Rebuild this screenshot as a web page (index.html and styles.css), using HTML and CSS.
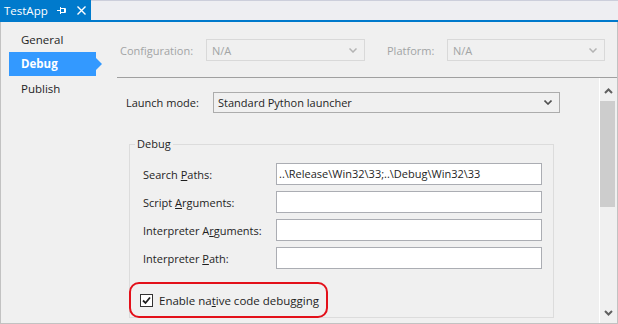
FILE: index.html
```html
<!DOCTYPE html>
<html lang="en">
<head>
    <meta charset="UTF-8">
    <title>TestApp</title>
    <link rel="stylesheet" href="styles.css">
</head>
<body>
    <div class="tabbar">
        <div class="tab">
            <span class="tab-title">TestApp</span>
            <svg class="tab-icon pin" width="10" height="9" viewBox="0 0 10 9">
                <path d="M0 4.5 H3.5 M3.5 1 V8 M3.5 2.5 H8.5 V6.5 H3.5 M7.5 2.5 V6.5" fill="none" stroke="#fff" stroke-width="1"/>
            </svg>
            <svg class="tab-icon" width="9" height="9" viewBox="0 0 9 9">
                <path d="M0.5 0.5 L8.5 8.5 M8.5 0.5 L0.5 8.5" fill="none" stroke="#fff" stroke-width="1.4"/>
            </svg>
        </div>
    </div>

    <div class="main">
        <nav class="sidebar">
            <div class="nav-item">General</div>
            <div class="nav-item active">Debug</div>
            <div class="nav-item">Publish</div>
        </nav>

        <div class="content">
            <div class="config-bar">
                <span class="config-label">Configuration:</span>
                <div class="select disabled config-select">
                    <span>N/A</span>
                    <svg width="8" height="5" viewBox="0 0 8 5"><path d="M0.5 0.5 L4 4 L7.5 0.5" fill="none" stroke="#b4b4b4" stroke-width="1.5"/></svg>
                </div>
                <span class="config-label platform-label">Platform:</span>
                <div class="select disabled platform-select">
                    <span>N/A</span>
                    <svg width="8" height="5" viewBox="0 0 8 5"><path d="M0.5 0.5 L4 4 L7.5 0.5" fill="none" stroke="#b4b4b4" stroke-width="1.5"/></svg>
                </div>
            </div>

            <div class="scroll-area">
                <div class="panel">
                    <div class="launch-row">
                        <span class="launch-label">Launch mode:</span>
                        <div class="select launch-select">
                            <span>Standard Python launcher</span>
                            <svg width="8" height="5" viewBox="0 0 8 5"><path d="M0.5 0.5 L4 4 L7.5 0.5" fill="none" stroke="#505050" stroke-width="1.6"/></svg>
                        </div>
                    </div>

                    <fieldset class="group">
                        <legend>Debug</legend>
                        <div class="field-row">
                            <span class="field-label">Search <u>P</u>aths:</span>
                            <div class="text-input">..\Release\Win32\33;..\Debug\Win32\33</div>
                        </div>
                        <div class="field-row">
                            <span class="field-label">Script <u>A</u>rguments:</span>
                            <div class="text-input"></div>
                        </div>
                        <div class="field-row">
                            <span class="field-label">Interpreter A<u>r</u>guments:</span>
                            <div class="text-input"></div>
                        </div>
                        <div class="field-row">
                            <span class="field-label">Interpreter <u>P</u>ath:</span>
                            <div class="text-input"></div>
                        </div>

                        <div class="highlight">
                            <span class="checkbox">
                                <svg width="11" height="11" viewBox="0 0 11 11"><path d="M2 5.5 L4.5 8 L9 2.5" fill="none" stroke="#1e1e1e" stroke-width="1.8"/></svg>
                            </span>
                            <span>Enable na<u>t</u>ive code debugging</span>
                        </div>
                    </fieldset>
                </div>

                <div class="scrollbar">
                    <div class="sb-btn sb-up">
                        <svg width="9" height="6" viewBox="0 0 9 6"><path d="M1 5 L4.5 1.5 L8 5" fill="none" stroke="#606060" stroke-width="2"/></svg>
                    </div>
                    <div class="sb-track"><div class="sb-thumb"></div></div>
                    <div class="sb-btn sb-down">
                        <svg width="9" height="6" viewBox="0 0 9 6"><path d="M1 1 L4.5 4.5 L8 1" fill="none" stroke="#606060" stroke-width="2"/></svg>
                    </div>
                </div>
            </div>
        </div>
    </div>
</body>
</html>
```

FILE: styles.css
```css
body {
    margin: 0;
    font-family: "Open Sans", "Noto Sans", sans-serif;
    font-size: 11px;
    color: #1e1e1e;
    background: #f0f0f0;
}
.tabbar {
    display: flex;
    width: 618px;
    height: 22px;
    box-sizing: border-box;
    background: #eeeef2;
    border-top: 1px solid #cccedb;
    border-bottom: 2px solid #007acc;
}
.tab {
    display: flex;
    align-items: center;
    width: 91px;
    height: 20px;
    margin-top: -1px;
    padding-left: 4px;
    box-sizing: border-box;
    background: #007acc;
    color: #fff;
    font-size: 11.5px;
}
.tab-title {
    flex-shrink: 0;
    width: 53px;
}
.tab-icon {
    flex-shrink: 0;
    margin-right: 10px;
}
.main {
    display: flex;
    width: 618px;
    height: 302px;
    box-sizing: border-box;
    border: 1px solid #c2c2c2;
    border-top: none;
}
.sidebar {
    width: 116px;
    padding-top: 6px;
}
.nav-item {
    position: relative;
    width: 87px;
    height: 24px;
    line-height: 24px;
    margin-left: 8px;
    padding-left: 12px;
    box-sizing: border-box;
    font-size: 11.5px;
}
.nav-item:last-child {
    margin-top: 1px;
}
.nav-item.active {
    background: #3399ff;
    color: #fff;
    font-weight: bold;
}
.nav-item.active::after {
    content: "";
    position: absolute;
    left: 87px;
    top: 6px;
    border-left: 6px solid #3399ff;
    border-top: 6px solid transparent;
    border-bottom: 6px solid transparent;
}
.content {
    flex: 1;
    display: flex;
    flex-direction: column;
    min-width: 0;
}
.config-bar {
    display: flex;
    align-items: center;
    padding: 17px 0 16px 3px;
    border-bottom: 1px solid #a0a0a0;
}
.config-label {
    width: 86px;
    color: #a2a4a5;
}
.platform-label {
    width: 60px;
    margin-left: 22px;
}
.select {
    display: flex;
    align-items: center;
    justify-content: space-between;
    height: 22px;
    padding: 0 7px 0 5px;
    box-sizing: border-box;
    border: 1px solid #acacac;
}
.select.disabled {
    border-color: #d9d9d9;
    color: #a2a4a5;
}
.config-select {
    width: 159px;
}
.platform-select {
    width: 158px;
}
.scroll-area {
    flex: 1;
    display: flex;
    min-height: 0;
}
.panel {
    flex: 1;
    overflow: hidden;
    padding: 14px 0 0 9px;
    border-right: 1px solid #fff;
}
.launch-row {
    display: flex;
    align-items: center;
}
.launch-label {
    width: 87px;
}
.launch-select {
    width: 347px;
    height: 21px;
    padding-left: 4px;
}
.group {
    width: 425px;
    margin: 23px 0 0 3px;
    padding: 11px 10px 0 13px;
    box-sizing: border-box;
    border: 1px solid #dcdcdc;
}
.group legend {
    margin-left: -8px;
    padding: 0 2px;
    line-height: 16px;
}
.field-row {
    display: flex;
    align-items: center;
    margin-bottom: 6px;
}
.field-label {
    width: 133px;
}
.text-input {
    width: 266px;
    height: 22px;
    line-height: 20px;
    padding: 0 2px;
    box-sizing: border-box;
    border: 1px solid #abadb3;
    background: #fff;
    white-space: nowrap;
    overflow: hidden;
}
.highlight {
    position: relative;
    display: flex;
    align-items: center;
    width: 199px;
    height: 36px;
    margin: 13px 0 -1px -14px;
    padding-left: 9px;
    box-sizing: border-box;
    border: 2px solid #e3101a;
    border-radius: 10px;
    font-size: 11.5px;
}
.checkbox {
    display: flex;
    align-items: center;
    justify-content: center;
    width: 13px;
    height: 13px;
    margin-right: 6px;
    box-sizing: border-box;
    border: 1px solid #333;
    background: #fff;
}
.scrollbar {
    display: flex;
    flex-direction: column;
    width: 17px;
}
.sb-btn {
    display: flex;
    justify-content: center;
    height: 23px;
}
.sb-up {
    align-items: flex-end;
    padding-bottom: 7px;
    box-sizing: border-box;
}
.sb-down {
    align-items: flex-start;
    padding-top: 10px;
    box-sizing: border-box;
}
.sb-track {
    flex: 1;
}
.sb-thumb {
    width: 15px;
    height: 106px;
    background: #cdcdcd;
}
```
